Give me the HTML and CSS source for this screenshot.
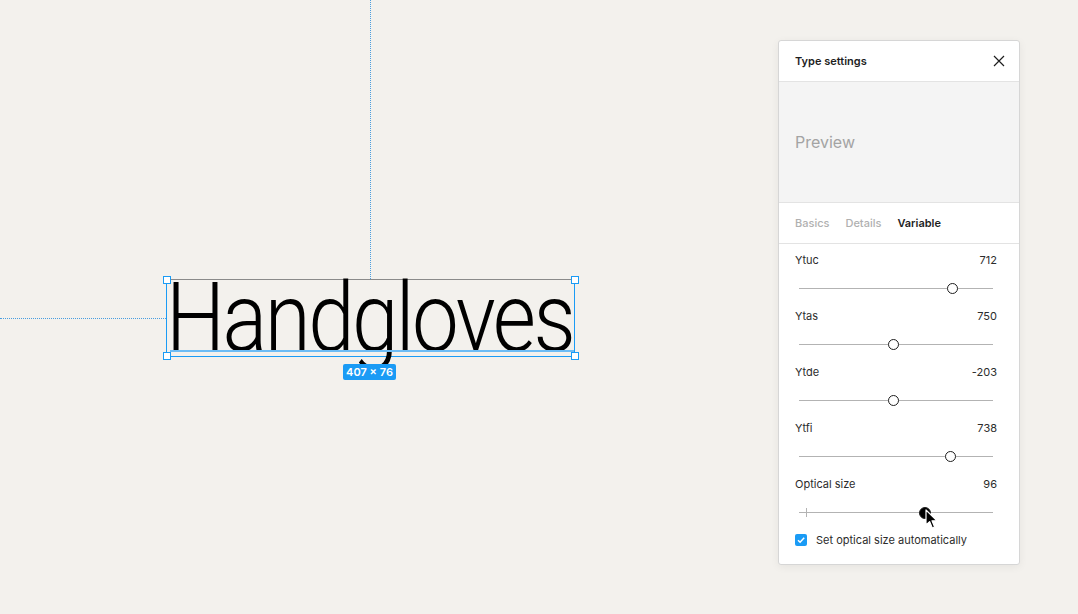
FILE: index.html
```html
<!DOCTYPE html>
<html lang="en">
<head>
    <meta charset="UTF-8">
    <meta name="viewport" content="width=device-width, initial-scale=1.0">
    <title>Type settings</title>
    <link rel="stylesheet" href="styles.css">
</head>
<body>
    <div class="canvas">
        <!-- guias de alineacion -->
        <div class="guide guide-v"></div>
        <div class="guide guide-h"></div>

        <!-- capa de texto seleccionada -->
        <div class="frame">
            <div class="frame-text">Handgloves</div>
            <div class="baseline"></div>
            <span class="handle h-tl"></span>
            <span class="handle h-tr"></span>
            <span class="handle h-bl"></span>
            <span class="handle h-br"></span>
        </div>
        <div class="size-label">407 × 76</div>

        <!-- panel flotante -->
        <div class="panel">
            <div class="panel-header">
                <span class="panel-title">Type settings</span>
                <svg class="close" width="12" height="12" viewBox="0 0 12 12">
                    <path d="M1 1 L11 11 M11 1 L1 11" stroke="#1e1e1e" stroke-width="1.2" fill="none"/>
                </svg>
            </div>
            <div class="preview">Preview</div>
            <div class="tabs">
                <span class="tab">Basics</span>
                <span class="tab">Details</span>
                <span class="tab active">Variable</span>
            </div>
            <div class="axes">
                <div class="axis">
                    <div class="axis-row"><span>Ytuc</span><span>712</span></div>
                    <div class="slider"><span class="track"></span><span class="thumb" style="left: 78.8%"></span></div>
                </div>
                <div class="axis">
                    <div class="axis-row"><span>Ytas</span><span>750</span></div>
                    <div class="slider"><span class="track"></span><span class="thumb" style="left: 48.7%"></span></div>
                </div>
                <div class="axis">
                    <div class="axis-row"><span>Ytde</span><span>-203</span></div>
                    <div class="slider"><span class="track"></span><span class="thumb" style="left: 48.7%"></span></div>
                </div>
                <div class="axis">
                    <div class="axis-row"><span>Ytfi</span><span>738</span></div>
                    <div class="slider"><span class="track"></span><span class="thumb" style="left: 77.7%"></span></div>
                </div>
                <div class="axis">
                    <div class="axis-row"><span>Optical size</span><span>96</span></div>
                    <div class="slider"><span class="track"></span><span class="tick"></span><span class="thumb active" style="left: 64.2%"></span></div>
                </div>
                <label class="check-row">
                    <span class="checkbox">
                        <svg width="12" height="12" viewBox="0 0 12 12">
                            <path d="M3 6.2 L5.1 8.2 L9.2 3.8" stroke="#fff" stroke-width="1.5" fill="none"/>
                        </svg>
                    </span>
                    Set optical size automatically
                </label>
            </div>
        </div>

        <!-- puntero -->
        <svg class="cursor" width="14" height="21" viewBox="0 0 14 21">
            <path d="M1 1 L1 16 L4.6 12.6 L7.3 19 L9.6 18 L7 11.8 L12 11.8 Z" fill="#000" stroke="#fff" stroke-width="1.2" stroke-linejoin="round"/>
        </svg>
    </div>
</body>
</html>
```

FILE: styles.css
```css
html, body {
    margin: 0;
    height: 100%;
}
body {
    font-family: Inter, "Noto Sans", sans-serif;
    background: #f3f1ed;
    color: #1e1e1e;
}
.canvas {
    position: relative;
    width: 1078px;
    height: 614px;
    overflow: hidden;
}
.guide {
    position: absolute;
}
.guide-v {
    left: 370px;
    top: 0;
    height: 279px;
    border-left: 1px dotted #4a9ee0;
}
.guide-h {
    left: 0;
    top: 318px;
    width: 166px;
    border-top: 1px dotted #4a9ee0;
}
.frame {
    position: absolute;
    left: 166px;
    top: 279px;
    width: 407px;
    height: 76px;
    border: 1px solid #1a9bf5;
    border-top-color: #8a8a8a;
}
.frame-text {
    position: absolute;
    left: -1px;
    top: 0;
    font-family: Roboto, "Liberation Sans", sans-serif;
    font-size: 97px;
    font-weight: 300;
    line-height: 76px;
    letter-spacing: -2.9px;
    color: #000;
    white-space: nowrap;
    transform: scaleX(0.86);
    transform-origin: left center;
}
.baseline {
    position: absolute;
    left: 3px;
    right: 0;
    bottom: 4px;
    height: 2px;
    background: #6cbcf5;
}
.handle {
    position: absolute;
    width: 6px;
    height: 6px;
    background: #fff;
    border: 1px solid #1a9bf5;
}
.h-tl { left: -4px; top: -4px; }
.h-tr { right: -5px; top: -4px; }
.h-bl { left: -4px; bottom: -4px; }
.h-br { right: -5px; bottom: -4px; }
.size-label {
    position: absolute;
    left: 343px;
    top: 364px;
    width: 53px;
    height: 16px;
    line-height: 16px;
    text-align: center;
    background: #1a9bf5;
    color: #fff;
    font-size: 11px;
    font-weight: 600;
    border-radius: 2px;
}
.panel {
    position: absolute;
    left: 778px;
    top: 40px;
    width: 240px;
    background: #fff;
    border: 1px solid #d6d6d6;
    border-radius: 3px;
    box-shadow: 0 2px 8px rgba(0, 0, 0, 0.06);
    font-size: 11px;
}
.panel-header {
    height: 40px;
    padding: 0 14px 0 16px;
    display: flex;
    align-items: center;
    justify-content: space-between;
    border-bottom: 1px solid #e3e3e3;
}
.panel-title {
    font-weight: 600;
}
.preview {
    height: 120px;
    background: #f4f4f4;
    display: flex;
    align-items: center;
    padding-left: 16px;
    font-size: 16px;
    color: #a3a3a3;
    border-bottom: 1px solid #e3e3e3;
}
.tabs {
    height: 40px;
    display: flex;
    align-items: center;
    gap: 16px;
    padding-left: 16px;
    border-bottom: 1px solid #e3e3e3;
}
.tab {
    color: #b0b0b0;
    font-weight: 500;
}
.tab.active {
    color: #1e1e1e;
    font-weight: 600;
}
.axes {
    padding: 9px 22px 17px 16px;
}
.axis {
    display: flex;
    flex-direction: column;
    gap: 10px;
    padding-bottom: 10px;
}
.axis-row {
    display: flex;
    justify-content: space-between;
    height: 14px;
    line-height: 14px;
    color: #2c2c2c;
}
.slider {
    position: relative;
    height: 22px;
    margin: 0 4px;
}
.track {
    position: absolute;
    left: 0;
    right: 0;
    top: 11px;
    height: 1px;
    background: #b3b3b3;
}
.tick {
    position: absolute;
    left: 7px;
    top: 7px;
    width: 1px;
    height: 9px;
    background: #b3b3b3;
}
.thumb {
    position: absolute;
    top: 6px;
    width: 9px;
    height: 9px;
    margin-left: -5px;
    border: 1px solid #1e1e1e;
    border-radius: 50%;
    background: #fff;
}
.thumb.active {
    background: #000;
    width: 10px;
    height: 10px;
}
.check-row {
    display: flex;
    align-items: center;
    gap: 9px;
    height: 14px;
    color: #2c2c2c;
}
.checkbox {
    width: 12px;
    height: 12px;
    border-radius: 2px;
    background: #1a9bf5;
    display: flex;
}
.cursor {
    position: absolute;
    left: 925px;
    top: 509px;
}
```
